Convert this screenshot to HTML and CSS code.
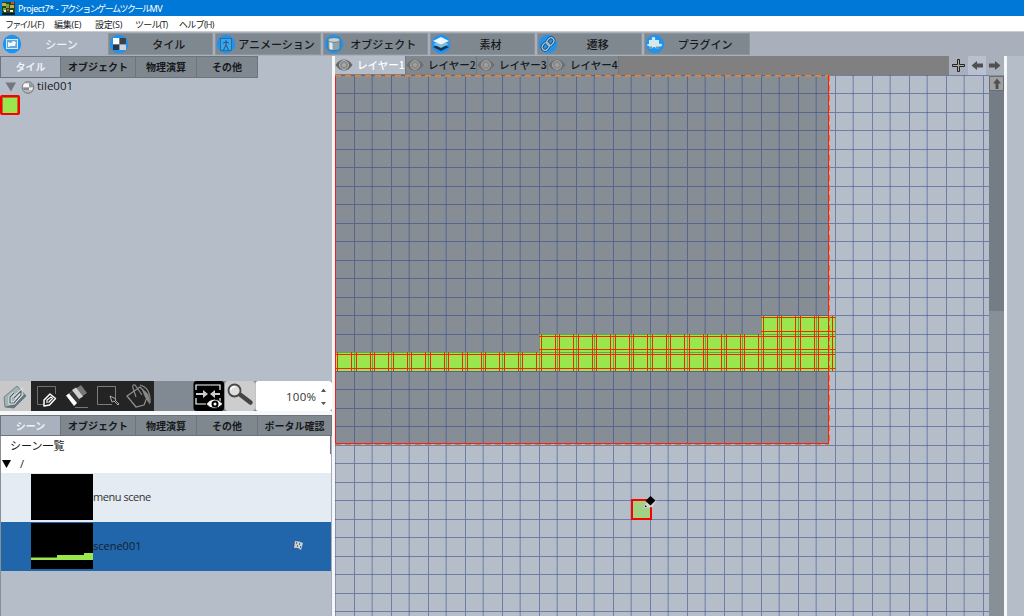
FILE: index.html
```html
<!DOCTYPE html>
<html lang="ja">
<head>
    <meta charset="UTF-8">
    <title>Project7* - アクションゲームツクールMV</title>
    <link rel="stylesheet" href="styles.css">
</head>
<body>
    <div class="titlebar">
        <svg width="13" height="13" viewBox="0 0 13 13">
            <rect width="13" height="13" fill="#29451c"/>
            <path d="M0 1h4v3H0zM8 3h4v3H8z" fill="#c9a94b"/>
            <path d="M4 2h3v4H4zM1 6h3v3H1z" fill="#63ae35"/>
            <path d="M9 0h3v2H9zM5 7h2v2H5z" fill="#d64e32"/>
            <path d="M2 8h2v2H2zM8 8h3v2H8z" fill="#eee"/>
            <path d="M0 11h13v2H0z" fill="#101c10"/>
        </svg>
        <span>Project7* - <span class="kana">アクションゲームツクール</span>MV</span>
    </div>

    <div class="menubar">
        <span class="m1"><span class="kana">ファイル</span>(F)</span>
        <span class="m2">編集(E)</span>
        <span class="m3">設定(S)</span>
        <span class="m4">ツール(T)</span>
        <span class="m5">ヘルプ(H)</span>
    </div>

    <div class="modes">
        <div class="mode active">
            <svg viewBox="0 0 20 20"><circle cx="10" cy="10" r="9.200" fill="#1c94f4"/><rect x="4.500" y="5.500" width="11" height="9" fill="#63a9d8" stroke="#d8e8f2"/><path d="M6 8l3 1 2-2 3 1-1 4H9l-3 1z" fill="#f3f7fa"/></svg>
            <span>シーン</span>
        </div>
        <div class="mode">
            <svg viewBox="0 0 20 20"><circle cx="10" cy="10" r="9.200" fill="#1c94f4"/><path d="M4 4h6.500v6.500H4z" fill="#fff"/><path d="M10.500 4H17v6.500h-6.500z" fill="#3d4247"/><path d="M4 10.500h6.500V16H4z" fill="#30363c"/><path d="M10.500 10.500H17V16h-6.500z" fill="#cfd4d8"/></svg>
            <span>タイル</span>
        </div>
        <div class="mode wide">
            <svg viewBox="0 0 20 20"><circle cx="10" cy="10" r="9.200" fill="#1c94f4"/><rect x="4.500" y="4.500" width="11" height="12" fill="#3ca4e8" stroke="#2e5f86" stroke-width=".8"/><path d="M10 6v5M7 9l3-1 3 1M7.500 16l2.500-5 2.500 5" fill="none" stroke="#24567f"/></svg>
            <span>アニメーション</span>
        </div>
        <div class="mode">
            <svg viewBox="0 0 20 20"><circle cx="10" cy="10" r="9.200" fill="#1c94f4"/><path d="M4 6v8q0 2.500 6 2.500t6-2.500V6" fill="#8fa3ab" stroke="#4c6470" stroke-width=".7"/><path d="M5.500 8v7l3 1V8.500z" fill="#e4ecee"/><ellipse cx="10" cy="6" rx="6" ry="2.300" fill="#c8d2d6" stroke="#546a75" stroke-width=".7"/></svg>
            <span>オブジェクト</span>
        </div>
        <div class="mode">
            <svg viewBox="0 0 20 20"><circle cx="10" cy="10" r="9.200" fill="#1c94f4"/><path d="M2 13l8-3 8 3-8 4z" fill="#173552"/><path d="M2 10l8-3 8 3-8 4z" fill="#79bddf"/><path d="M2 7l8-4 8 4-8 3.500z" fill="#edf6fb"/></svg>
            <span>素材</span>
        </div>
        <div class="mode">
            <svg viewBox="0 0 20 20"><circle cx="10" cy="10" r="9.200" fill="#1c94f4"/><g fill="none" stroke="#28506e" stroke-width="3"><rect x="9" y="3.500" width="6" height="8" rx="3" transform="rotate(40 12 8)"/><rect x="5" y="8.500" width="6" height="8" rx="3" transform="rotate(40 8 12)"/></g><g fill="none" stroke="#a9cadb" stroke-width="1.200"><rect x="9" y="3.500" width="6" height="8" rx="3" transform="rotate(40 12 8)"/><rect x="5" y="8.500" width="6" height="8" rx="3" transform="rotate(40 8 12)"/></g></svg>
            <span>遷移</span>
        </div>
        <div class="mode">
            <svg viewBox="0 0 20 20"><circle cx="10" cy="10" r="9.200" fill="#1c94f4"/><path d="M4 6h3q-1-3 1.500-3T10 6h4v4q3-1 3 1t-3 1.500V15h-3q0-2-2-2t-2 2H4v-3q-2 0-2-1t2-1z" fill="#d7e7ee"/><path d="M4 12.500h3V15H4zM11 12.500h3V15h-3z" fill="#7897a8"/></svg>
            <span>プラグイン</span>
        </div>
    </div>

    <div class="workspace">
        <div class="side">
            <div class="tabs">
                <span class="tab w1 active">タイル</span><span class="tab w2">オブジェクト</span><span class="tab w3">物理演算</span><span class="tab w3">その他</span>
            </div>
            <div class="tiles">
                <div class="tile-group">
                    <svg width="36" height="18" viewBox="0 0 36 18">
                        <path d="M5.500 4.500h10.500L11 13.500z" fill="#73777d"/>
                        <circle cx="28" cy="9.500" r="5.800" fill="#b5b7ba" stroke="#777"/>
                        <path d="M24 5.500h5v4h-6q0-2 1-4z" fill="#fafafa"/>
                        <path d="M29 5.500h3l1 4h-4z" fill="#93969a"/>
                        <path d="M23 9.500h6V12h-5z" fill="#85888c"/>
                        <path d="M29 9.500h4L32 12h-3z" fill="#eee"/>
                    </svg>
                    <span>tile001</span>
                </div>
                <div class="swatch"></div>
            </div>

            <div class="tools">
                <svg width="332" height="30" viewBox="0 0 332 30">
                    <rect width="31" height="30" fill="#c8c8c8"/>
                    <rect x="31" width="123" height="30" fill="#242424"/>
                    <path d="M4 16L17 5l9 10-12 12-9-1z" fill="#a3b2b7" stroke="#738187" stroke-linejoin="round"/>
                    <path d="M26 15L14 27l-9-1 9-3 11-10z" fill="#63757d"/>
                    <path d="M14 12l-4 4v6h4l7-8v-4l-7 7" fill="none" stroke="#eaf0f0" stroke-width="3"/>
                    <path d="M14 12l-4 4v6h4l7-8v-4l-7 7" fill="none" stroke="#4f5f66" stroke-width="1.200"/>
                    <path d="M45 23.500h-7.500v-18h18V13" fill="none" stroke="#707070"/>
                    <path d="M44 25v-6l6-6 5.500 4.500-6 6.500z" fill="#242424" stroke="#fff" stroke-width="1.500" stroke-linejoin="round"/>
                    <path d="M47 22v-3l4-3 1.500 1.500-4 4" fill="none" stroke="#fff" stroke-width="1.200"/>
                    <path d="M68 13L81 4l6 8-13 9z" fill="#777"/>
                    <path d="M69 13l4-3 8 9-5 3v3z" fill="#363636"/>
                    <path d="M66 14.500l3-2 8 9.500-3 3z" fill="#fff"/>
                    <path d="M72 9l4-2.500 7 9-4 2.500z" fill="#d0d0d0"/>
                    <path d="M75 26.500h13" stroke="#777"/>
                    <path d="M112 23.500H97.500v-18h18V17" fill="none" stroke="#7c7c7c"/>
                    <path d="M110 15l6 3-1 1 4 4-1 1-4-4-2 1z" fill="#242424" stroke="#aaa"/>
                    <path d="M127 15l13-9 8 8-4 10-8 2z" fill="none" stroke="#929292" stroke-width="1.200"/>
                    <path d="M136 16l-3-9q-1-4 2-3l7 10M140 4q11 3 10 18" fill="none" stroke="#8b8b8b" stroke-width="1.200"/>
                    <path d="M142 9q8 2 8 15l-5-8z" fill="#888"/>
                    <rect x="193.500" width="30.500" height="30" rx="3" fill="#000"/>
                    <path d="M196 9V4h24v5M196 17v6h11M220 17v3" fill="none" stroke="#fff" stroke-width="1.200"/>
                    <path d="M196 12h7V9l5 4-5 4v-3h-7zM220 12h-5V9l-5 4 5 4v-3h5z" fill="#ccc"/>
                    <path d="M206 23q8-10 17 0-9 9-17 0z" fill="#fff" stroke="#000"/>
                    <circle cx="215" cy="23" r="3.500"/><circle cx="215" cy="23" r="1.500" fill="#fff"/>
                    <rect x="225" width="30" height="30" rx="3" fill="#cdcdcd"/>
                    <path d="M240 13.500l10.500 8" stroke="#444" stroke-width="4.500" stroke-linecap="round"/>
                    <circle cx="234.500" cy="9.500" r="6" fill="#dedede" stroke="#484848" stroke-width="1.800"/>
                    <path d="M230.500 9q1-4 5-3" fill="none" stroke="#fff" stroke-width="1.500"/>
                    <rect x="255.500" width="76.500" height="30" rx="3" fill="#fff"/>
                    <text x="286" y="20" textLength="30">100%</text>
                    <path d="M321 11h5l-2.500-3.500zM321 21h5l-2.500 3z" fill="#555"/>
                </svg>
            </div>

            <div class="tabs lower">
                <span class="tab w1 active">シーン</span><span class="tab w2">オブジェクト</span><span class="tab w3">物理演算</span><span class="tab w3">その他</span><span class="tab w4">ポータル確認</span>
            </div>
            <div class="scene-list">
                <div class="list-head">シーン一覧</div>
                <div class="root"><svg width="12" height="14"><path d="M2 3h9l-4.500 8z"/></svg><span>/</span></div>
                <div class="scene">
                    <div class="thumb"></div>
                    <span class="name">menu scene</span>
                </div>
                <div class="scene selected">
                    <div class="thumb"><svg width="62" height="46"><path d="M0 34.500h26v-2.500h27v-2h9v7H0z" fill="#99e64d"/></svg></div>
                    <span>scene001</span>
                    <svg class="flag" width="14" height="14" viewBox="0 0 14 14">
                        <path d="M2.500 3l-2 9" stroke="#3d5878"/>
                        <path d="M3 2q4 0 8 2l-2 7q-3-3-7-2z" fill="#c9ced3"/>
                        <path d="M4 3h1v2H4zM7 4h1v2H7zM5 6h1v2H5zM8 7h1v2H8z" fill="#6b747d"/>
                    </svg>
                </div>
            </div>
        </div>

        <div class="editor">
            <div class="layers">
                <div class="layer active">
                    <svg viewBox="0 0 18 12"><path d="M.5 6Q4 .5 9 .5T17.500 6Q14 11.500 9 11.500T.5 6Z" fill="#666"/><circle cx="9" cy="6" r="4.500" fill="#898989" stroke="#b5b5b5"/><circle cx="9" cy="6" r="2" fill="#aaa"/></svg>
                    <span>レイヤー1</span>
                </div>
                <div class="layer">
                    <svg viewBox="0 0 18 12"><path d="M.5 6Q4 .5 9 .5T17.500 6Q14 11.500 9 11.500T.5 6Z" fill="#6e6e6e"/><circle cx="9" cy="6" r="4.500" fill="#898989" stroke="#a5a5a5"/><circle cx="9" cy="6" r="2" fill="#a0a0a0"/></svg>
                    <span>レイヤー2</span>
                </div>
                <div class="layer">
                    <svg viewBox="0 0 18 12"><path d="M.5 6Q4 .5 9 .5T17.500 6Q14 11.500 9 11.500T.5 6Z" fill="#6e6e6e"/><circle cx="9" cy="6" r="4.500" fill="#898989" stroke="#a5a5a5"/><circle cx="9" cy="6" r="2" fill="#a0a0a0"/></svg>
                    <span>レイヤー3</span>
                </div>
                <div class="layer">
                    <svg viewBox="0 0 18 12"><path d="M.5 6Q4 .5 9 .5T17.500 6Q14 11.500 9 11.500T.5 6Z" fill="#6e6e6e"/><circle cx="9" cy="6" r="4.500" fill="#898989" stroke="#a5a5a5"/><circle cx="9" cy="6" r="2" fill="#a0a0a0"/></svg>
                    <span>レイヤー4</span>
                </div>
                <svg class="layer-nav" width="55" height="19" viewBox="0 0 55 19">
                    <rect width="55" height="19" fill="#a9b0bc"/>
                    <rect x="19" width="18" height="19" fill="#b9c1d0"/>
                    <path d="M8.500 3.500h2v5h5v2h-5v5h-2v-5h-5v-2h5z" fill="#aaa" stroke="#222"/>
                    <path d="M22.500 9.500L28 5v2.500h6v4h-6V14zM51.500 9.500L46 5v2.500h-6v4h6V14z" fill="#505050"/>
                </svg>
            </div>
            <div class="stage">
                <svg width="654" height="541" viewBox="0 0 654 541">
                    <defs>
                        <pattern id="grid" width="37" height="37" patternUnits="userSpaceOnUse">
                            <path d="M0 0h37v1H0zM0 18h37v1H0zM19 0h1v37h-1z" fill="#29408a" fill-opacity=".5"/>
                            <path d="M0 0h1v37H0zM36 0h1v37h-1z" fill="#29408a" fill-opacity=".18"/>
                            <path d="M0 0h1v37H0z" fill="#29408a" fill-opacity=".2"/>
                        </pattern>
                        <pattern id="tile" width="37" height="37" patternUnits="userSpaceOnUse">
                            <rect width="37" height="37" fill="#99e64d"/>
                            <path d="M0 0h37v1H0zM0 18h37v1H0zM0 0h1v37H0zM19 0h1v37h-1z" fill="#6ba259"/>
                            <path d="M2.500 0v37M16.500 0v37M21.500 0v37M35.500 0v37M0 2.500h37M0 15.500h37M0 20.500h37M0 34.500h37" stroke="#f22800"/>
                        </pattern>
                    </defs>
                    <rect width="654" height="541" fill="#b5bdc9"/>
                    <rect width="494" height="369" fill="#878d95"/>
                    <rect width="654" height="541" fill="url(#grid)"/>
                    <path d="M0 277h204v-18h222v-18h74.500v55H0z" fill="url(#tile)"/>
                    <path d="M0 .7H494" stroke="#f0842a" stroke-width="1.400" stroke-dasharray="6 4"/>
                    <path d="M494.500 0v370M0 369.500h494" stroke="#e58032" stroke-dasharray="6 4"/>
                    <path d="M.5 1v368M493.500 0v369M0 368.500h494" stroke="#ee2020" fill="none"/>
                    <rect x="297" y="425" width="19" height="19" fill="#a3d184" stroke="#fb0000" stroke-width="2"/>
                    <path d="M309 431l6-7 6.500 1.500-4 6.500-8 1z" fill="#cfd6d4"/>
                    <path d="M310.500 426l5-5 5 4.500-5 5z"/>
                    <path d="M310 430v2h2z"/>
                </svg>
                <div class="scrollbar">
                    <div class="up"><svg width="14" height="14"><path d="M7 1.500l4 5H8.500V12h-3V6.500H3z" fill="#505050"/></svg></div>
                    <div class="bar"></div>
                </div>
            </div>
        </div>
        <div class="right"></div>
    </div>
</body>
</html>
```
FILE: styles.css
```css
* {
    box-sizing: border-box;
}
body {
    margin: 0;
    width: 1024px;
    height: 616px;
    overflow: hidden;
    background: #b5bdc9;
    color: #17191c;
    font-family: "Open Sans", "Noto Sans CJK JP", sans-serif;
    font-size: 11px;
    white-space: nowrap;
    display: flex;
    flex-direction: column;
}
svg {
    display: block;
    flex: none;
}
.titlebar {
    height: 16px;
    background: #0078d7;
    color: white;
    display: flex;
    align-items: center;
    gap: 3px;
    padding-left: 2px;
    font-size: 9px;
    line-height: 15px;
}
.titlebar span {
    font-family: "Noto Sans", "Noto Sans CJK JP", sans-serif;
    letter-spacing: -0.4px;
}
.titlebar .kana {
    letter-spacing: -1.5px;
}
.menubar {
    height: 16px;
    background: white;
    border-bottom: 1px solid #c9cdd2;
    display: flex;
    padding-left: 5px;
    font-size: 9px;
    line-height: 17px;
}
.menubar span {
    letter-spacing: -0.2px;
}
.menubar .m1 {
    width: 49px;
}
.menubar .kana {
    letter-spacing: -1.8px;
    margin-right: 1px;
}
.menubar .m2 {
    width: 41px;
}
.menubar .m3 {
    width: 40px;
}
.menubar .m4 {
    width: 44px;
    letter-spacing: -0.8px;
}
.menubar .m5 {
    letter-spacing: -0.7px;
}
.modes {
    height: 24px;
    background: #a9b0bc;
    display: flex;
    gap: 2px;
    padding: 1px 0;
}
.mode {
    width: 105.300px;
    height: 22px;
    background: #7f878f;
    border: 1px solid #8c949e;
    display: flex;
    align-items: center;
    font-family: "Noto Sans CJK JP", sans-serif;
    font-weight: 500;
    font-size: 11px;
    line-height: 18px;
}
.mode svg {
    width: 20px;
    height: 20px;
}
.mode span {
    flex: 1;
    text-align: center;
    padding-right: 4px;
    padding-bottom: 1px;
}
.mode.wide span {
    padding-right: 3px;
}
.mode.active {
    background: #a9b1be;
    border-color: #a9b1be;
    color: #edf0f5;
    width: 106px;
    padding-left: 1px;
}
.workspace {
    flex: 1;
    display: flex;
    min-height: 0;
}
.side {
    width: 335px;
    border-right: 3px solid #f6f7f9;
    display: flex;
    flex-direction: column;
}
.tabs {
    height: 22px;
    display: flex;
    flex: none;
}
.tab {
    background: #7f878f;
    border: 1px solid #6d747c;
    border-left-width: 0;
    text-align: center;
    font-family: "Noto Sans CJK JP", sans-serif;
    font-size: 10px;
    font-weight: 700;
    line-height: 20px;
}
.tab.active {
    background: #a9b1be;
    color: #eef1f6;
    border-left-width: 1px;
}
.w1 {
    width: 61px;
}
.w2 {
    width: 75px;
}
.w3 {
    width: 61px;
}
.w4 {
    width: 74px;
}
.tiles {
    height: 303px;
    flex: none;
}
.tile-group {
    display: flex;
    height: 17px;
    line-height: 15px;
    gap: 1px;
    font-size: 11.500px;
}
.swatch {
    width: 20px;
    height: 20px;
    background: #99e64d;
    border: 2px solid #fb0000;
    border-radius: 2px;
    box-shadow: inset 1px 1px 0 #ad7627, inset -1px 0 0 #ad7627;
}
.tools {
    height: 34px;
    background: #818993;
    border-bottom: 4px solid #f6f7f9;
    flex: none;
}
.tools text {
    font-size: 11.500px;
    fill: #333;
}
.lower {
    height: 21px;
}
.scene-list {
    border-left: 1px solid #898f97;
    border-right: 1px solid #a7acb3;
    flex: 1;
}
.list-head {
    height: 18px;
    background: white;
    padding-left: 9px;
    line-height: 18px;
    border-right: 1px solid #777;
    font-family: "Noto Sans CJK JP", sans-serif;
}
.root {
    height: 19px;
    background: white;
    display: flex;
    align-items: center;
    gap: 8px;
    line-height: 17px;
}
.root svg {
    margin-left: -1px;
}
.scene {
    height: 49px;
    background: #e4ebf2;
    display: flex;
    align-items: center;
    padding: 0 0 1px 30px;
    color: #333;
}
.scene span {
    padding-bottom: 1px;
}
.thumb {
    width: 62px;
    height: 46px;
    background: black;
}
.name {
    letter-spacing: -0.450px;
}
.scene.selected {
    background: #2166aa;
    color: #14202e;
}
.flag {
    margin-left: auto;
    margin-right: 25px;
    margin-bottom: 1px;
}
.editor {
    width: 669px;
    display: flex;
    flex-direction: column;
}
.layers {
    height: 19px;
    background: #808080;
    display: flex;
    flex: none;
}
.layer {
    width: 71px;
    height: 18px;
    background: #7f878f;
    border-right: 1px solid #70777f;
    display: flex;
    align-items: center;
    gap: 4px;
    font-family: "Noto Sans CJK JP", sans-serif;
    font-size: 10.500px;
    font-weight: 500;
    line-height: 16px;
}
.layer span {
    padding-bottom: 1px;
}
.layer svg {
    width: 18px;
    height: 12px;
}
.layer.active {
    background: #b5bdc9;
    color: white;
}
.layer-nav {
    margin-left: auto;
}
.stage {
    flex: 1;
    display: flex;
}
.scrollbar {
    width: 15px;
    background: #878f97;
    padding-top: 1px;
}
.up {
    width: 15px;
    height: 15px;
    background: #a0a0a0;
    border: 1px solid #686e75;
}
.bar {
    height: 220px;
    background: #747c85;
}
.right {
    flex: 1;
    border-left: 3px solid #f6f7f9;
    background: #b5bdc9;
}
```
